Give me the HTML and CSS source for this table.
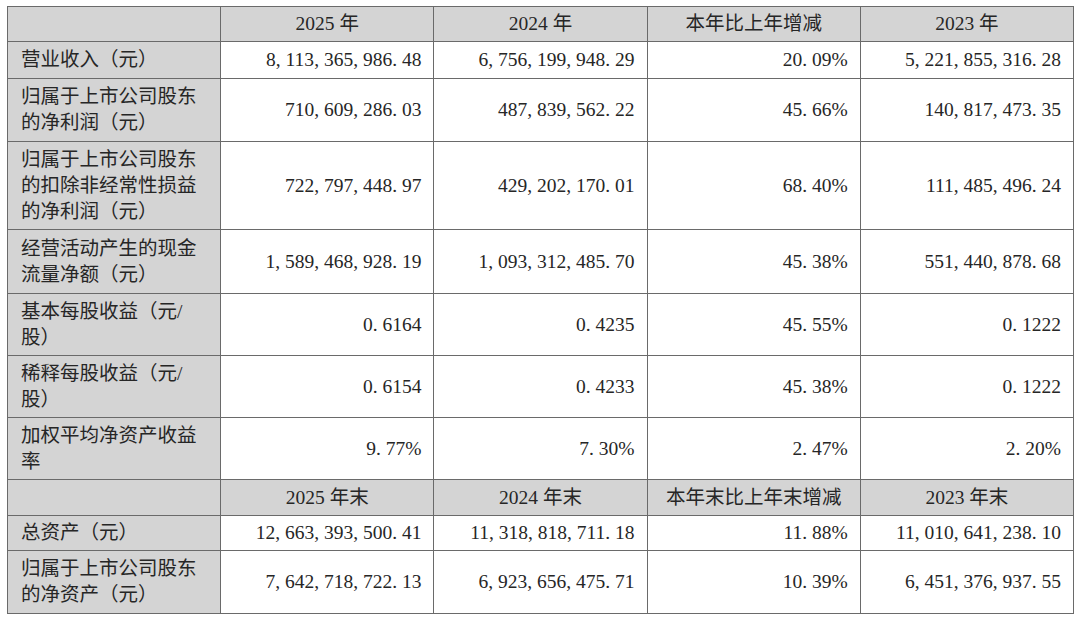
FILE: index.html
```html
<!DOCTYPE html>
<html lang="zh-CN">
<head>
<meta charset="utf-8">
<title>主要会计数据</title>
<link rel="stylesheet" href="styles.css">
</head>
<body>
<table class="fin">
  <colgroup>
    <col class="c-label"><col><col><col><col>
  </colgroup>
  <tr class="head h35">
    <td class="lab"></td><td>2025 年</td><td>2024 年</td><td>本年比上年增减</td><td>2023 年</td>
  </tr>
  <tr class="h37">
    <td class="lab">营业收入（元）</td>
    <td>8<span class="p">,</span>113<span class="p">,</span>365<span class="p">,</span>986<span class="p">.</span>48</td>
    <td>6<span class="p">,</span>756<span class="p">,</span>199<span class="p">,</span>948<span class="p">.</span>29</td>
    <td>20<span class="p">.</span>09%</td>
    <td>5<span class="p">,</span>221<span class="p">,</span>855<span class="p">,</span>316<span class="p">.</span>28</td>
  </tr>
  <tr class="h63">
    <td class="lab">归属于上市公司股东的净利润（元）</td>
    <td>710<span class="p">,</span>609<span class="p">,</span>286<span class="p">.</span>03</td>
    <td>487<span class="p">,</span>839<span class="p">,</span>562<span class="p">.</span>22</td>
    <td>45<span class="p">.</span>66%</td>
    <td>140<span class="p">,</span>817<span class="p">,</span>473<span class="p">.</span>35</td>
  </tr>
  <tr class="h88">
    <td class="lab">归属于上市公司股东的扣除非经常性损益的净利润（元）</td>
    <td>722<span class="p">,</span>797<span class="p">,</span>448<span class="p">.</span>97</td>
    <td>429<span class="p">,</span>202<span class="p">,</span>170<span class="p">.</span>01</td>
    <td>68<span class="p">.</span>40%</td>
    <td>111<span class="p">,</span>485<span class="p">,</span>496<span class="p">.</span>24</td>
  </tr>
  <tr class="h64">
    <td class="lab">经营活动产生的现金流量净额（元）</td>
    <td>1<span class="p">,</span>589<span class="p">,</span>468<span class="p">,</span>928<span class="p">.</span>19</td>
    <td>1<span class="p">,</span>093<span class="p">,</span>312<span class="p">,</span>485<span class="p">.</span>70</td>
    <td>45<span class="p">.</span>38%</td>
    <td>551<span class="p">,</span>440<span class="p">,</span>878<span class="p">.</span>68</td>
  </tr>
  <tr class="h62">
    <td class="lab">基本每股收益（元/<br>股）</td>
    <td>0<span class="p">.</span>6164</td>
    <td>0<span class="p">.</span>4235</td>
    <td>45<span class="p">.</span>55%</td>
    <td>0<span class="p">.</span>1222</td>
  </tr>
  <tr class="h62">
    <td class="lab">稀释每股收益（元/<br>股）</td>
    <td>0<span class="p">.</span>6154</td>
    <td>0<span class="p">.</span>4233</td>
    <td>45<span class="p">.</span>38%</td>
    <td>0<span class="p">.</span>1222</td>
  </tr>
  <tr class="h62">
    <td class="lab">加权平均净资产收益率</td>
    <td>9<span class="p">.</span>77%</td>
    <td>7<span class="p">.</span>30%</td>
    <td>2<span class="p">.</span>47%</td>
    <td>2<span class="p">.</span>20%</td>
  </tr>
  <tr class="head h36">
    <td class="lab"></td><td>2025 年末</td><td>2024 年末</td><td>本年末比上年末增减</td><td>2023 年末</td>
  </tr>
  <tr class="h35">
    <td class="lab">总资产（元）</td>
    <td>12<span class="p">,</span>663<span class="p">,</span>393<span class="p">,</span>500<span class="p">.</span>41</td>
    <td>11<span class="p">,</span>318<span class="p">,</span>818<span class="p">,</span>711<span class="p">.</span>18</td>
    <td>11<span class="p">.</span>88%</td>
    <td>11<span class="p">,</span>010<span class="p">,</span>641<span class="p">,</span>238<span class="p">.</span>10</td>
  </tr>
  <tr class="h63">
    <td class="lab">归属于上市公司股东的净资产（元）</td>
    <td>7<span class="p">,</span>642<span class="p">,</span>718<span class="p">,</span>722<span class="p">.</span>13</td>
    <td>6<span class="p">,</span>923<span class="p">,</span>656<span class="p">,</span>475<span class="p">.</span>71</td>
    <td>10<span class="p">.</span>39%</td>
    <td>6<span class="p">,</span>451<span class="p">,</span>376<span class="p">,</span>937<span class="p">.</span>55</td>
  </tr>
</table>
</body>
</html>
```

FILE: styles.css
```css
html, body {
  margin: 0;
  padding: 0;
  background: #ffffff;
}

body {
  padding: 6px 0 0 7px;
  font-family: "Liberation Serif", "Noto Sans CJK SC", serif;
  color: #262626;
}

.fin {
  border-collapse: collapse;
  table-layout: fixed;
  width: 1067px;
  font-size: 19.5px;
  line-height: 26px;
}

.fin td {
  border: 1px solid #6a6a6a;
  padding: 0 12px 0 13px;
  text-align: right;
  vertical-align: middle;
  white-space: normal;
  overflow: hidden;
}

.fin td.lab {
  text-align: left;
  background: #d4d4d4;
  padding-right: 14px;
}

.fin .head td {
  background: #d4d4d4;
  text-align: center;
  padding: 0 4px;
}

.p {
  letter-spacing: 0.25em;
}

.h35 { height: 35px; }
.h36 { height: 36px; }
.h37 { height: 37px; }
.h62 { height: 62px; }
.h63 { height: 63px; }
.h64 { height: 64px; }
.h88 { height: 88px; }
```
